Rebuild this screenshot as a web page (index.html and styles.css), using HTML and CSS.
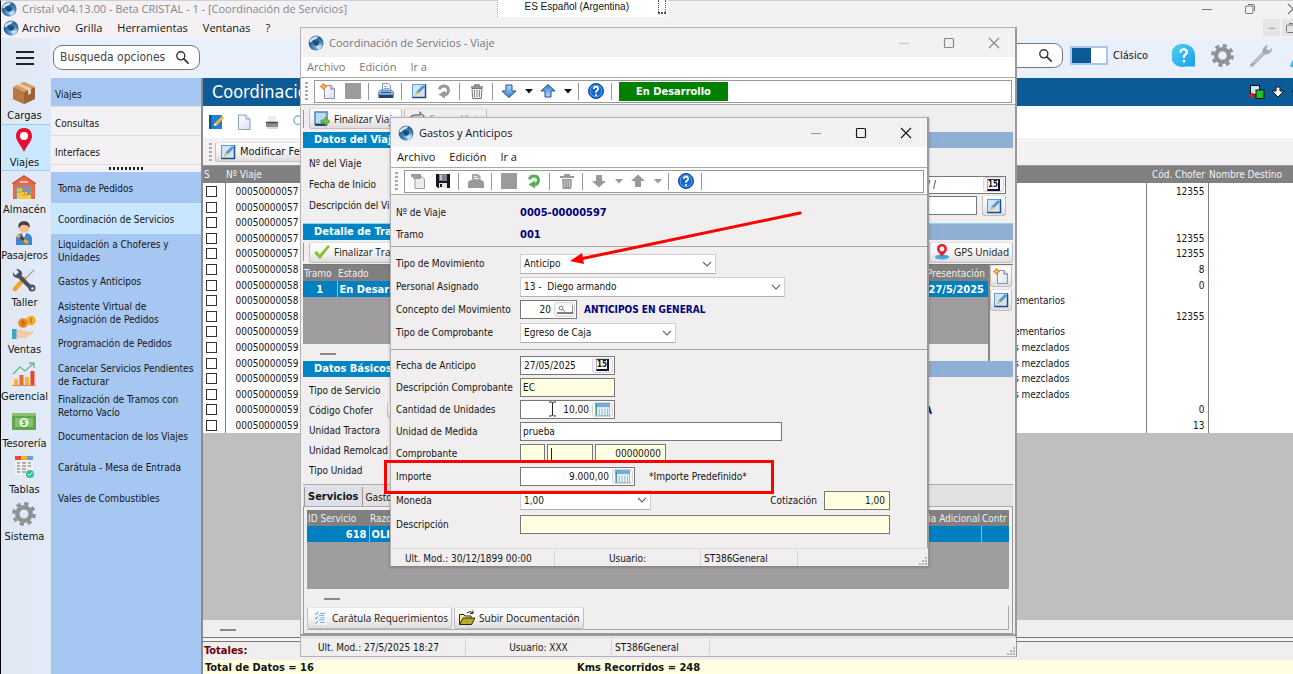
FILE: index.html
```html
<!DOCTYPE html>
<html lang="es">
<head>
<meta charset="utf-8">
<title>Cristal v04.13.00 - Coordinación de Servicios</title>
<link rel="stylesheet" href="styles.css">
</head>
<body>
<svg class="defs" aria-hidden="true">
  <defs>
    <radialGradient id="gGlobe" cx=".62" cy=".7" r=".75"><stop offset="0" stop-color="#d3ecf8"/><stop offset=".35" stop-color="#4e96c8"/><stop offset=".75" stop-color="#2a5f93"/><stop offset="1" stop-color="#7fa3c4"/></radialGradient>
    <linearGradient id="gBlue" x1="0" y1="0" x2="0" y2="1"><stop offset="0" stop-color="#b7ddfa"/><stop offset="1" stop-color="#2f7fd0"/></linearGradient>
    <linearGradient id="gPage" x1="0" y1="0" x2="1" y2="1"><stop offset="0" stop-color="#fff"/><stop offset="1" stop-color="#d8e0f2"/></linearGradient>
    <linearGradient id="gChat" x1="0" y1="0" x2="1" y2="1"><stop offset="0" stop-color="#55d0ee"/><stop offset="1" stop-color="#149ff0"/></linearGradient>
    <symbol id="globe" viewBox="0 0 16 16"><circle cx="8" cy="8" r="7.500" fill="url(#gGlobe)"/><path d="M2 5Q5 1 10 1.500Q9 4 5 5Q4 7 1.500 7.500Z" fill="#dbe9f4"/><path d="M4.500 6.500Q8 4 11 6.500Q12 10 8 11Q5 10 4.500 6.500Z" fill="#1d4d84"/><path d="M9 12Q12 12 14 9Q14 13 10 15Z" fill="#c5e6f5"/></symbol>
    <symbol id="search" viewBox="0 0 16 16"><circle cx="6.200" cy="6.200" r="4.300" fill="none" stroke="currentColor" stroke-width="1.500"/><path d="M9.500 9.500L14 14" stroke="currentColor" stroke-width="1.800" stroke-linecap="round"/></symbol>
    <symbol id="box" viewBox="0 0 24 24"><path d="M1 6L12 1L23 6V18L12 23L1 18Z" fill="#c98a54"/><path d="M1 6L12 11V23L1 18Z" fill="#b87843"/><path d="M12 11L23 6V18L12 23Z" fill="#9b6233"/><path d="M1 6L12 1L23 6L12 11Z" fill="#d99e68"/><path d="M5 4L16 9V14L19 12.500V7.500L8 2.700Z" fill="#ead0ae"/></symbol>
    <symbol id="pin" viewBox="0 0 24 24"><path d="M12 0C6 0 4 4.500 4 8C4 13 10 19 12 24C14 19 20 13 20 8C20 4.500 18 0 12 0Z" fill="#e5102f"/><circle cx="12" cy="8" r="4" fill="#fff"/></symbol>
    <symbol id="warehouse" viewBox="0 0 24 24"><path d="M1 8L12 1L23 8V24H1Z" fill="#e8694a"/><path d="M0 9L12 1L24 9" fill="none" stroke="#c9533c" stroke-width="1.500"/><rect x="4" y="11" width="16" height="13" fill="#8d8f9b"/><path d="M5 24V13H10V17H15V20H19V24Z" fill="#f6c945"/><path d="M5 17H10M10 20H15M7.500 13V15M12.500 17V19" stroke="#c9902a"/><rect x="8" y="6" width="8" height="2" fill="#f8c0a8"/></symbol>
    <symbol id="person" viewBox="0 0 24 24"><circle cx="12" cy="7" r="5" fill="#f3bd96"/><path d="M6.500 7Q5 1 12 0Q19 1 17.500 7Q15 3 10 4Z" fill="#4d3a3a"/><path d="M4 24V17Q5 12 12 12Q19 12 20 17V24Z" fill="#3b86d6"/><path d="M10 12L12 17L14 12Z" fill="#fff"/><path d="M5 14L16 22" stroke="#f3ad36" stroke-width="3"/><path d="M8 16L12 19" stroke="#444" stroke-width="3"/></symbol>
    <symbol id="tools" viewBox="0 0 24 24"><path d="M22 2L12 12" stroke="#a3a8ad" stroke-width="1.500"/><path d="M12 11L3 21" stroke="#f5a42a" stroke-width="4.500" stroke-linecap="round"/><path d="M5 6L19 20" stroke="#465260" stroke-width="4"/><path d="M1 4Q0 9 5 10Q10 10 10 5Q9 1 4 1L7 4L6 7L3 7Z" fill="#465260"/><circle cx="20" cy="20" r="3.500" fill="#465260"/><circle cx="20.500" cy="20.500" r="1.300" fill="#dde6f3"/></symbol>
    <symbol id="hand" viewBox="0 0 24 24"><circle cx="19" cy="5.500" r="4.800" fill="#f2ad2e"/><circle cx="11" cy="8" r="4.800" fill="#e88b1c"/><path d="M11 5.500V10.500M9.500 7Q13 6 12 9M19 3V8" stroke="#b4570b" fill="none"/><path d="M4 15Q9 13 12 16H17Q15 19 11 18.500L21 16Q23 16 21 18L14 23H4Z" fill="#f8c9a8"/><rect x="0" y="14" width="4.500" height="10" fill="#3aa7c9"/></symbol>
    <symbol id="chart" viewBox="0 0 24 24"><rect x="2" y="17" width="4" height="6" fill="#f9b233"/><rect x="7.500" y="13" width="4" height="10" fill="#f0662c"/><rect x="13" y="15" width="4" height="8" fill="#f9b233"/><rect x="18.500" y="9" width="4" height="14" fill="#e8452b"/><path d="M1 12L8 5L13 9L22 1M17 1H22V6" fill="none" stroke="#60b88e" stroke-width="1.300"/><path d="M0 23.500H24" stroke="#e9864a"/></symbol>
    <symbol id="cash" viewBox="0 0 24 24"><rect x="0" y="4" width="24" height="17" rx="1" fill="#5fa64e"/><rect x="0" y="4" width="24" height="3" fill="#86c46c"/><rect x="3" y="9" width="18" height="9" fill="#86c46c"/><circle cx="12" cy="13.500" r="4.500" fill="#e4f3da"/><path d="M13.500 11.500H11V13.500H13V15.500H10.500" fill="none" stroke="#4a9140"/></symbol>
    <symbol id="sheet" viewBox="0 0 24 24"><rect x="3" y="2" width="18" height="18" fill="#eef0ee"/><rect x="3" y="1" width="6" height="4" fill="#e9473f"/><rect x="9" y="1" width="6" height="4" fill="#f7b32b"/><rect x="15" y="1" width="6" height="4" fill="#58a6e8"/><path d="M5 8H8M5 11H8M5 14H8M5 17H8M10 8H14M10 11H14M10 14H14M10 17H14M16 8H19M16 11H19" stroke="#9a9c9c" stroke-width="1.500"/><circle cx="18" cy="19" r="4" fill="#2fc29b"/><path d="M16 19L17.500 20.500L20 17.500" stroke="#fff" fill="none"/></symbol>
    <symbol id="gear" viewBox="0 0 24 24"><circle cx="12" cy="12" r="6.700" fill="none" stroke="#8f9295" stroke-width="4.500"/><circle cx="12" cy="12" r="10.200" fill="none" stroke="#8f9295" stroke-width="3.400" stroke-dasharray="4.200 3.810"/></symbol>
    <symbol id="wrench" viewBox="0 0 24 24"><path d="M2 22L15 9" stroke="#a7aaaf" stroke-width="3.500" stroke-linecap="round"/><path d="M13 8Q13 2 19 1L17 5L20 7L23 4Q24 10 16 11Z" fill="#a7aaaf"/><path d="M4 20L14 10" stroke="#e6e7ea"/></symbol>
    <symbol id="chat" viewBox="0 0 24 24"><path d="M12 0A12 12 0 1 0 14 23.500H24V12A12 12 0 0 0 12 0Z" fill="url(#gChat)"/><path d="M8.500 9Q9 5.500 12.500 5.500Q16 6 15.500 9.500Q14 11 12.500 12.500V14.500" fill="none" stroke="#fff" stroke-width="2.200"/><circle cx="12.500" cy="18" r="1.500" fill="#fff"/></symbol>
    <symbol id="user" viewBox="0 0 24 24"><path d="M1 24Q2 15 12 14Q22 15 23 24Z" fill="#2fc4ea"/><circle cx="12" cy="7" r="6" fill="#f4dff0"/></symbol>
    <symbol id="new" viewBox="0 0 16 16"><path d="M4.500 2.500H11L14.500 6V15.500H4.500Z" fill="url(#gPage)" stroke="#8a8fb5"/><path d="M11 2.500V6H14.500" fill="#dfe4f4" stroke="#6d74a3"/><path d="M3.500 0L4.700 2.300L7 3.500L4.700 4.700L3.500 7L2.300 4.700L0 3.500L2.300 2.300Z" fill="#f58a1f" stroke="#f58a1f" stroke-width=".8"/><circle cx="3.500" cy="3.500" r="1" fill="#ffe3b0"/></symbol>
    <symbol id="newOff" viewBox="0 0 16 16"><path d="M5 3H11L14.500 6V15.500H5Z" fill="#ececec" stroke="#9c9c9c"/><path d="M1 1H11V6H3V4H1Z" fill="#9c9c9c"/></symbol>
    <symbol id="page" viewBox="0 0 16 16"><path d="M2.500 1H10L14 5V15.500H2.500Z" fill="url(#gPage)" stroke="#8ba0b5"/><path d="M10 1V5H14" fill="#eef" stroke="#8ba0b5"/></symbol>
    <symbol id="save" viewBox="0 0 16 16"><path d="M1 1H15V15H3L1 13Z" fill="#15171f"/><rect x="4" y="1" width="8" height="7" fill="#7f8187"/><path d="M5 2H7V7H5Z" fill="#bfc1c6"/><rect x="4" y="10" width="8" height="5" fill="#e4e5e8"/><rect x="5" y="11" width="2" height="3" fill="#15171f"/></symbol>
    <symbol id="print" viewBox="0 0 16 16"><path d="M4.500 .5H10L12.500 3V8H4.500Z" fill="#f6f9fd" stroke="#8796ad"/><path d="M6 3.500H9M6 5.500H11" stroke="#8fa5c0"/><path d="M.5 9L3 7H13L15.500 9V12H.5Z" fill="#88bce4" stroke="#4a78a8" stroke-width=".8"/><path d="M.5 12H15.500V15H.5Z" fill="#23466c"/><path d="M3 9.500H13" stroke="#355e89" stroke-width="1.200"/></symbol>
    <symbol id="printOff" viewBox="0 0 16 16"><path d="M4 1H10L12.500 3V8H4Z" fill="#aaa"/><path d="M6 3.500H9M6 5.500H11" stroke="#f4f4f4"/><path d="M0 9L2.500 7H13.500L16 9V15H0Z" fill="#9a9a9a"/></symbol>
    <symbol id="printGray" viewBox="0 0 16 16"><path d="M4 2H12V8H4Z" fill="#ececee"/><path d="M2 8H14V13H2Z" fill="#8d8d90"/><path d="M2 8.500H14" stroke="#444" stroke-width="1.500"/><path d="M3 13H14V15H3Z" fill="#d9d9db"/></symbol>
    <symbol id="edit" viewBox="0 0 16 16"><rect x="1.500" y="1.500" width="13" height="13" fill="#cfe6fa" stroke="#5f9bd0"/><path d="M1.500 14.500H14.500V1.500" fill="none" stroke="#214a80" stroke-width="1.500"/><path d="M4 12.500L6 8L12 2L14 4L8 10Z" fill="#5595cf"/><path d="M4 12.500L6 9L10 10Z" fill="#f3c94d"/></symbol>
    <symbol id="note" viewBox="0 0 16 16"><rect x="1" y="1" width="13" height="14" fill="#2380cc"/><path d="M1 1H3.500V15H1Z" fill="#0f538f"/><path d="M6 12L7 9L14 2L16 4L9 11Z" fill="#f6b53a"/><path d="M6 12L7 9L9 11Z" fill="#fff"/></symbol>
    <symbol id="undo" viewBox="0 0 16 16"><path d="M3.500 6.500Q4 3 8 3Q12.500 3.500 12.500 7.500Q12 11.500 8 12" fill="none" stroke="currentColor" stroke-width="3"/><path d="M2.500 11.500L9 7.500V15.500Z" fill="currentColor"/></symbol>
    <symbol id="trash" viewBox="0 0 16 16"><path d="M2 4H14M6 4V2H10V4" fill="none" stroke="#777" stroke-width="1.500"/><path d="M3 5.500H13L12.300 15.500H3.700Z" fill="#f0f0f0" stroke="#777"/><path d="M5.500 7V14M8 7V14M10.500 7V14" stroke="#888"/></symbol>
    <symbol id="trashOff" viewBox="0 0 16 16"><path d="M1 3H15V5H1ZM5 1H11V3H5ZM3 6H13L12.300 16H3.700Z" fill="#999"/><path d="M5.500 7V14M8 7V14M10.500 7V14" stroke="#c7c7c7"/></symbol>
    <symbol id="down" viewBox="0 0 16 16"><path d="M5 2H11V8H15L8 14.500L1 8H5Z" fill="url(#gBlue)" stroke="#1c4f94"/></symbol>
    <symbol id="downOff" viewBox="0 0 16 16"><path d="M5 2H11V8H15L8 14.500L1 8H5Z" fill="#999"/></symbol>
    <symbol id="downWhite" viewBox="0 0 14 12"><path d="M5 1H9V5H13L7 11L1 5H5Z" fill="#fff" stroke="#111"/></symbol>
    <symbol id="caret" viewBox="0 0 8 8"><path d="M0 2H8L4 6.500Z" fill="currentColor"/></symbol>
    <symbol id="help" viewBox="0 0 16 16"><circle cx="8" cy="8" r="7.500" fill="#1467d2" stroke="#0b459b"/><circle cx="8" cy="8" r="5.800" fill="none" stroke="#62a5f2"/><path d="M5.700 6Q6 3.700 8 3.700Q10.500 4 10.200 6.200Q9.500 7.500 8 8.500V9.800" fill="none" stroke="#fff" stroke-width="1.700"/><circle cx="8" cy="12" r="1.100" fill="#fff"/></symbol>
    <symbol id="finish" viewBox="0 0 16 16"><rect x="1" y="1" width="12" height="12" fill="#b9dbf5" stroke="#4a82b5" stroke-width="1.500"/><path d="M1 14H13" stroke="#234a77" stroke-width="2"/><path d="M7 9H11V6L16 10.500L11 15V12H7Z" fill="#7ac142" stroke="#438a1f" stroke-width=".7"/></symbol>
    <symbol id="loop" viewBox="0 0 16 16"><path d="M1 8Q2 4 7 4H11V1.500L15 5.500L11 9V6.500H5M15 9Q14 13 9 13H4" fill="none" stroke="#777" stroke-width="1.300"/></symbol>
    <symbol id="check" viewBox="0 0 16 16"><path d="M0 9L3 7L5.500 10.500L14 1L16 2.500L6 15Z" fill="#85c22b"/></symbol>
    <symbol id="gps" viewBox="0 0 16 16"><ellipse cx="8" cy="13" rx="7" ry="2.500" fill="#3aa9e0"/><path d="M8 0C4.500 0 3 2.500 3 5C3 8 7 10.500 8 13C9 10.500 13 8 13 5C13 2.500 11.500 0 8 0Z" fill="#e42330"/><circle cx="8" cy="5" r="2.400" fill="#fff"/></symbol>
    <symbol id="list" viewBox="0 0 16 16"><path d="M3 1H14V15H3Z" fill="#eef5fc"/><path d="M3 3.500L4 4.500L6 2M3 8L4 9L6 6.500M3 12.500L4 13.500L6 11" fill="none" stroke="#4f97d8"/><path d="M8 3.500H13M8 8H13M8 12.500H13M7 5.500H12M7 10H12" stroke="#8db0d0"/></symbol>
    <symbol id="folder" viewBox="0 0 16 16"><path d="M.5 14.500V4.500H5L6 6H12V8" fill="#f6ef9c" stroke="#2b2b12"/><path d="M.5 14.500L4 8H16L12.500 14.500Z" fill="#b4ac2c" stroke="#2b2b12"/><path d="M8 3Q11 0 14 3M14 .5V3.500H11" fill="none" stroke="#2b2b12"/></symbol>
    <symbol id="calc" viewBox="0 0 16 14"><rect x=".5" y=".5" width="15" height="13" fill="#eef6fc" stroke="#9db8cf"/><path d="M0 0H16V4.500H0Z" fill="#74abd8"/><path d="M4.500 6V13M7.500 6V13M10.500 6V13M13.500 6V13" stroke="#8cacc5"/><path d="M1.500 1V13" stroke="#3c9c8b" stroke-width="1.200"/></symbol>
    <symbol id="lens" viewBox="0 0 16 9"><path d="M0 0H16V8H0Z" fill="#fff"/><path d="M0 8H16V0" fill="none" stroke="#555" stroke-width="1.300"/><circle cx="4" cy="3" r="1.900" fill="none" stroke="#777"/><path d="M5.500 4.500L8 6.500" stroke="#777"/></symbol>
    <symbol id="chev" viewBox="0 0 10 10"><path d="M1 3L5 7L9 3" fill="none" stroke="#666" stroke-width="1.100"/></symbol>
    <symbol id="min" viewBox="0 0 12 12"><path d="M1 6.500H11" stroke="currentColor"/></symbol>
    <symbol id="max" viewBox="0 0 12 12"><rect x="1.500" y="1.500" width="9" height="9" rx="1" fill="none" stroke="currentColor" stroke-width="1.200"/></symbol>
    <symbol id="restore" viewBox="0 0 12 12"><rect x="1.500" y="3" width="7.500" height="7.500" rx="1" fill="none" stroke="currentColor"/><path d="M4 1.500H9Q10.500 1.500 10.500 3V8" fill="none" stroke="currentColor"/></symbol>
    <symbol id="close" viewBox="0 0 12 12"><path d="M1 1L11 11M11 1L1 11" stroke="currentColor" stroke-width="1.200"/></symbol>
    <symbol id="grip" viewBox="0 0 9 9"><path d="M7 1h2v2h-2zM7 4h2v2h-2zM4 4h2v2h-2zM7 7h2v2h-2zM4 7h2v2h-2zM1 7h2v2h-2z" fill="#b5b3b5"/></symbol>
    <symbol id="windows" viewBox="0 0 16 16"><rect x="1.500" y="1.500" width="9" height="9" fill="#cfe6f5" stroke="#111"/><rect x="7" y="6" width="8" height="8.500" fill="#20c024" stroke="#111"/><path d="M0 11L4 9V14ZM3 11.500H6" fill="#e02020" stroke="#e02020"/></symbol>
  </defs>
</svg>

<div class="app">
  <header class="titlebar app-title">
    <svg class="i16"><use href="#globe"/></svg>
    <h1>Cristal v04.13.00 - Beta CRISTAL - 1 - [Coordinación de Servicios]</h1>
    <span class="ctl"><button aria-label="Minimizar"><svg class="i12"><use href="#min"/></svg></button><button aria-label="Restaurar"><svg class="i12"><use href="#restore"/></svg></button><button aria-label="Cerrar"><svg class="i12"><use href="#close"/></svg></button></span>
  </header>
  <nav class="menubar app-menu">
    <svg class="i16"><use href="#globe"/></svg>
    <a href="#">Archivo</a><a href="#">Grilla</a><a href="#">Herramientas</a><a href="#">Ventanas</a><a href="#">?</a>
    <span class="mdi"><button aria-label="Minimizar ventana"><svg class="i8"><use href="#min"/></svg></button><button aria-label="Restaurar ventana"><svg class="i12"><use href="#restore"/></svg></button></span>
  </nav>
  <div class="lang"><span>ES Español (Argentina)</span><i></i></div>

  <div class="shell">
    <nav class="rail">
      <button class="burger" aria-label="Menú"><i></i><i></i><i></i></button>
      <div class="rail-list">
        <a href="#"><svg class="i24"><use href="#box"/></svg>Cargas</a>
        <a href="#" class="on"><svg class="i24"><use href="#pin"/></svg>Viajes</a>
        <a href="#"><svg class="i24"><use href="#warehouse"/></svg>Almacén</a>
        <a href="#"><svg class="i24"><use href="#person"/></svg>Pasajeros</a>
        <a href="#"><svg class="i24"><use href="#tools"/></svg>Taller</a>
        <a href="#"><svg class="i24"><use href="#hand"/></svg>Ventas</a>
        <a href="#"><svg class="i24"><use href="#chart"/></svg>Gerencial</a>
        <a href="#"><svg class="i24"><use href="#cash"/></svg>Tesorería</a>
        <a href="#"><svg class="i24"><use href="#sheet"/></svg>Tablas</a>
        <a href="#"><svg class="i24"><use href="#gear"/></svg>Sistema</a>
      </div>
    </nav>

    <div class="work">
      <div class="topbar">
        <label class="search"><input type="text" placeholder="Busqueda opciones" aria-label="Busqueda opciones"><svg class="i16"><use href="#search"/></svg></label>
        <span class="top-right">
          <label class="search search-r"><input type="text" aria-label="Buscar"><svg class="i16"><use href="#search"/></svg></label>
          <label class="toggle"><input type="checkbox">Clásico</label>
          <span class="top-icons"><svg class="i24"><use href="#chat"/></svg><svg class="i24"><use href="#gear"/></svg><svg class="i24"><use href="#wrench"/></svg><svg class="i24"><use href="#user"/></svg></span>
        </span>
      </div>
      <div class="cols">
        <aside class="submenu">
          <div class="groups"><a href="#" class="on">Viajes</a><a href="#">Consultas</a><a href="#">Interfaces</a></div>
          <div class="splitter"><i></i></div>
          <div class="entries">
            <a href="#">Toma de Pedidos</a>
            <a href="#" class="on">Coordinación de Servicios</a>
            <a href="#">Liquidación a Choferes y<br>Unidades</a>
            <a href="#">Gastos y Anticipos</a>
            <a href="#">Asistente Virtual de<br>Asignación de Pedidos</a>
            <a href="#">Programación de Pedidos</a>
            <a href="#">Cancelar Servicios Pendientes<br>de Facturar</a>
            <a href="#">Finalización de Tramos con<br>Retorno Vacío</a>
            <a href="#">Documentacion de los Viajes</a>
            <a href="#">Carátula - Mesa de Entrada</a>
            <a href="#">Vales de Combustibles</a>
          </div>
        </aside>

        <main class="main">
          <div class="main-head"><h2>Coordinación</h2><span><svg class="i16"><use href="#windows"/></svg><svg class="i-arr"><use href="#downWhite"/></svg><svg class="i-arr"><use href="#downWhite"/></svg></span></div>
          <div class="main-tools"><button aria-label="Editar"><svg class="i16"><use href="#note"/></svg></button><button aria-label="Nuevo"><svg class="i16"><use href="#page"/></svg></button><button aria-label="Imprimir"><svg class="i16"><use href="#printGray"/></svg></button><button aria-label="Buscar" class="pale"><svg class="i16"><use href="#search"/></svg></button></div>
          <div class="main-actions"><i class="grab"></i><button class="btn"><svg class="i16"><use href="#edit"/></svg>Modificar Fecha</button></div>
          <div class="grid-area">
            <table class="trips">
              <colgroup><col class="c-s"><col class="c-n"><col><col class="c-c"><col class="c-d"></colgroup>
              <thead><tr><th>S</th><th>Nº Viaje</th><th></th><th class="r">Cód. Chofer</th><th>Nombre Destino</th></tr></thead>
              <tbody>
                <tr><td><input type="checkbox" aria-label="Viaje 1"></td><td>00050000057</td><td></td><td>12355</td><td></td></tr>
                <tr><td><input type="checkbox" aria-label="Viaje 2"></td><td>00050000057</td><td></td><td></td><td></td></tr>
                <tr><td><input type="checkbox" aria-label="Viaje 3"></td><td>00050000057</td><td></td><td></td><td></td></tr>
                <tr><td><input type="checkbox" aria-label="Viaje 4"></td><td>00050000057</td><td></td><td>12355</td><td></td></tr>
                <tr><td><input type="checkbox" aria-label="Viaje 5"></td><td>00050000057</td><td></td><td>12355</td><td></td></tr>
                <tr><td><input type="checkbox" aria-label="Viaje 6"></td><td>00050000058</td><td></td><td>8</td><td></td></tr>
                <tr><td><input type="checkbox" aria-label="Viaje 7"></td><td>00050000058</td><td></td><td>0</td><td></td></tr>
                <tr><td><input type="checkbox" aria-label="Viaje 8"></td><td>00050000058</td><td>ementarios</td><td></td><td></td></tr>
                <tr><td><input type="checkbox" aria-label="Viaje 9"></td><td>00050000058</td><td></td><td>12355</td><td></td></tr>
                <tr><td><input type="checkbox" aria-label="Viaje 10"></td><td>00050000059</td><td>ementarios</td><td></td><td></td></tr>
                <tr><td><input type="checkbox" aria-label="Viaje 11"></td><td>00050000059</td><td>s mezclados</td><td></td><td></td></tr>
                <tr><td><input type="checkbox" aria-label="Viaje 12"></td><td>00050000059</td><td>s mezclados</td><td></td><td></td></tr>
                <tr><td><input type="checkbox" aria-label="Viaje 13"></td><td>00050000059</td><td>s mezclados</td><td></td><td></td></tr>
                <tr><td><input type="checkbox" aria-label="Viaje 14"></td><td>00050000059</td><td>s mezclados</td><td></td><td></td></tr>
                <tr><td><input type="checkbox" aria-label="Viaje 15"></td><td>00050000059</td><td></td><td>0</td><td></td></tr>
                <tr><td><input type="checkbox" aria-label="Viaje 16"></td><td>00050000059</td><td></td><td>13</td><td></td></tr>
              </tbody>
            </table>
          </div>
          <div class="hscroll"><i></i></div>
          <div class="totals">Totales:</div>
          <div class="sums"><span>Total de Datos = 16</span><span>Kms Recorridos = 248</span></div>
        </main>
      </div>
    </div>
  </div>
</div>

<section class="win win-trip">
  <header class="titlebar">
    <svg class="i16"><use href="#globe"/></svg><h2>Coordinación de Servicios - Viaje</h2>
    <span class="ctl"><button aria-label="Minimizar" class="dim"><svg class="i12"><use href="#min"/></svg></button><button aria-label="Maximizar"><svg class="i12"><use href="#max"/></svg></button><button aria-label="Cerrar"><svg class="i12"><use href="#close"/></svg></button></span>
  </header>
  <nav class="menubar"><a href="#">Archivo</a><a href="#">Edición</a><a href="#">Ir a</a></nav>
  <div class="toolbar"><i class="grab"></i><div class="tools">
    <button aria-label="Nuevo"><svg class="i16"><use href="#new"/></svg></button><button aria-label="Detener"><i class="sq"></i></button><i class="sep"></i>
    <button aria-label="Imprimir"><svg class="i16"><use href="#print"/></svg></button><i class="sep"></i>
    <button aria-label="Editar"><svg class="i16"><use href="#edit"/></svg></button><button aria-label="Deshacer" class="gray"><svg class="i16"><use href="#undo"/></svg></button><i class="sep"></i>
    <button aria-label="Eliminar"><svg class="i16"><use href="#trash"/></svg></button><i class="sep"></i>
    <button aria-label="Siguiente" class="wide"><svg class="i16"><use href="#down"/></svg><svg class="i8"><use href="#caret"/></svg></button>
    <button aria-label="Anterior" class="wide"><svg class="i16 flip"><use href="#down"/></svg><svg class="i8"><use href="#caret"/></svg></button><i class="sep"></i>
    <button aria-label="Ayuda"><svg class="i16"><use href="#help"/></svg></button><i class="sep"></i>
    <span class="state">En Desarrollo</span>
  </div></div>
  <div class="win-body">
    <div class="actions"><i class="bar"></i><button class="btn"><svg class="i16"><use href="#finish"/></svg>Finalizar Viaje</button><button class="btn off"><svg class="i16"><use href="#loop"/></svg>Cerrar Viaje</button></div>
    <h3 class="sect">Datos del Viaj</h3>
    <div class="info info-trip">
      <div><span>Nº del Viaje</span></div>
      <div><label for="finicio">Fecha de Inicio</label><span class="field f-date"><input id="finicio" type="text" value="/ /"><button aria-label="Calendario"><b class="cal">15</b></button></span></div>
      <div><label for="dviaje">Descripción del Via</label><input id="dviaje" class="box f-desc" type="text"><button class="btn sq-btn" aria-label="Editar"><svg class="i16"><use href="#edit"/></svg></button></div>
    </div>
    <h3 class="sect line">Detalle de Tra</h3>
    <div class="actions actions-leg"><i class="bar"></i><button class="btn"><svg class="i16"><use href="#check"/></svg>Finalizar Tra</button><button class="btn push"><svg class="i16"><use href="#gps"/></svg>GPS Unidad</button></div>
    <div class="legs">
      <div class="legs-grid">
        <table class="sub"><colgroup><col class="w34"><col><col class="w62"></colgroup><thead><tr><th>Tramo</th><th>Estado</th><th>Presentación</th></tr></thead><tbody><tr><td class="c">1</td><td>En Desarr</td><td>27/5/2025</td></tr></tbody></table>
        <div class="hscroll"><i></i></div>
      </div>
      <div class="legs-side"><button class="btn sq-btn" aria-label="Nuevo tramo"><svg class="i16"><use href="#new"/></svg></button><button class="btn sq-btn" aria-label="Editar tramo"><svg class="i16"><use href="#edit"/></svg></button></div>
    </div>
    <h3 class="sect">Datos Básicos</h3>
    <div class="info info-basic">
      <div>Tipo de Servicio</div>
      <div><span class="lab">Código Chofer</span><button class="btn mini" aria-label="Buscar chofer"></button><b class="navy tail">A</b></div>
      <div>Unidad Tractora</div><div>Unidad Remolcad</div><div>Tipo Unidad</div>
    </div>
    <div class="tabs"><button class="on">Servicios</button><button>Gastos</button></div>
    <div class="tab-page">
      <div class="svc-grid">
        <table class="sub"><colgroup><col class="w62"><col><col class="w84"><col class="w28"></colgroup><thead><tr><th>ID Servicio</th><th>Razo</th><th class="r">ia Adicional</th><th>Contr</th></tr></thead><tbody><tr><td class="r">618</td><td>OLI</td><td></td><td></td></tr></tbody></table>
        <div class="hscroll"><i></i></div>
      </div>
      <div class="svc-actions"><button class="btn"><svg class="i16"><use href="#list"/></svg>Carátula Requerimientos</button><button class="btn"><svg class="i16"><use href="#folder"/></svg>Subir Documentación</button></div>
    </div>
  </div>
  <footer class="status"><span class="s1">Ult. Mod.: 27/5/2025 18:27</span><span class="s2">Usuario: XXX</span><span class="s3">ST386General</span><svg class="grip"><use href="#grip"/></svg></footer>
</section>

<section class="win win-cost">
  <header class="titlebar">
    <svg class="i16"><use href="#globe"/></svg><h2>Gastos y Anticipos</h2>
    <span class="ctl"><button aria-label="Minimizar" class="dim"><svg class="i12"><use href="#min"/></svg></button><button aria-label="Maximizar"><svg class="i12"><use href="#max"/></svg></button><button aria-label="Cerrar"><svg class="i12"><use href="#close"/></svg></button></span>
  </header>
  <nav class="menubar"><a href="#">Archivo</a><a href="#">Edición</a><a href="#">Ir a</a></nav>
  <div class="toolbar"><i class="grab"></i><div class="tools">
    <button aria-label="Nuevo"><svg class="i16"><use href="#newOff"/></svg></button><button aria-label="Guardar"><svg class="i16"><use href="#save"/></svg></button><i class="sep"></i>
    <button aria-label="Imprimir"><svg class="i16"><use href="#printOff"/></svg></button><i class="sep"></i>
    <button aria-label="Detener"><i class="sq"></i></button><button aria-label="Deshacer" class="green"><svg class="i16"><use href="#undo"/></svg></button><i class="sep"></i>
    <button aria-label="Eliminar"><svg class="i16"><use href="#trashOff"/></svg></button><i class="sep"></i>
    <button aria-label="Siguiente" class="wide gray"><svg class="i16"><use href="#downOff"/></svg><svg class="i8"><use href="#caret"/></svg></button>
    <button aria-label="Anterior" class="wide gray"><svg class="i16 flip"><use href="#downOff"/></svg><svg class="i8"><use href="#caret"/></svg></button><i class="sep"></i>
    <button aria-label="Ayuda"><svg class="i16"><use href="#help"/></svg></button><i class="sep"></i>
  </div></div>
  <form class="form">
    <div class="part part-id">
      <div class="row"><span class="lbl">Nº de Viaje</span><b class="navy">0005-00000597</b></div>
      <div class="row"><span class="lbl">Tramo</span><b class="navy">001</b></div>
    </div>
    <div class="part part-type">
      <div class="row"><label class="lbl" for="tmov">Tipo de Movimiento</label><span class="sel w196"><select id="tmov"><option>Anticipo</option></select><svg><use href="#chev"/></svg></span></div>
      <div class="row"><label class="lbl" for="pers">Personal Asignado</label><span class="sel w265"><select id="pers"><option>13 - &nbsp;Diego armando</option></select><svg><use href="#chev"/></svg></span></div>
      <div class="row"><label class="lbl" for="conc">Concepto del Movimiento</label><span class="field w57"><input id="conc" class="r" type="text" value="20"><button type="button" aria-label="Buscar concepto"><svg class="lens"><use href="#lens"/></svg></button></span><b class="navy note">ANTICIPOS EN GENERAL</b></div>
      <div class="row"><label class="lbl" for="tcom">Tipo de Comprobante</label><span class="sel w156"><select id="tcom"><option>Egreso de Caja</option></select><svg><use href="#chev"/></svg></span></div>
    </div>
    <div class="part part-data">
      <div class="row"><label class="lbl" for="fant">Fecha de Anticipo</label><span class="field w95"><input id="fant" type="text" value="27/05/2025"><button type="button" aria-label="Calendario"><b class="cal">15</b></button></span></div>
      <div class="row"><label class="lbl" for="dcom">Descripción Comprobante</label><input id="dcom" class="box yel w95" type="text" value="EC"></div>
      <div class="row"><label class="lbl" for="cant">Cantidad de Unidades</label><span class="field w95"><input id="cant" class="r" type="text" value="10,00"><button type="button" aria-label="Calculadora"><svg class="calc"><use href="#calc"/></svg></button></span></div>
      <div class="row"><label class="lbl" for="umed">Unidad de Medida</label><input id="umed" class="box w262" type="text" value="prueba"></div>
      <div class="row"><label class="lbl" for="comp">Comprobante</label><span class="trio"><input id="comp" class="box yel w25" type="text"><input class="box yel w46 caret" type="text" aria-label="Punto de venta"><input class="box yel r w71" type="text" value="00000000" aria-label="Número"></span></div>
      <div class="row tall"><label class="lbl" for="imp">Importe</label><span class="field w115"><input id="imp" class="r" type="text" value="9.000,00"><button type="button" aria-label="Calculadora"><svg class="calc"><use href="#calc"/></svg></button></span><span class="note2">*Importe Predefinido*</span></div>
      <div class="row tall"><label class="lbl" for="mon">Moneda</label><span class="sel w131"><select id="mon"><option>1,00</option></select><svg><use href="#chev"/></svg></span><span class="quote"><label for="cot">Cotización</label><input id="cot" class="box yel r w66" type="text" value="1,00"></span></div>
      <div class="row tall"><label class="lbl" for="desc">Descripción</label><input id="desc" class="box yel w370" type="text"></div>
    </div>
  </form>
  <footer class="status"><span class="s1">Ult. Mod.: 30/12/1899 00:00</span><span class="s2">Usuario:</span><span class="s3">ST386General</span><svg class="grip"><use href="#grip"/></svg></footer>
  <div class="hilite"></div>
  <svg class="arrow" viewBox="0 0 236 56" aria-hidden="true"><path d="M232 3L12 49" stroke="#f00" stroke-width="3" stroke-linecap="round"/><path d="M2 51L14 43L16 54Z" fill="#f00"/></svg>
  <svg class="ibeam" viewBox="0 0 9 16" aria-hidden="true"><path d="M1 1H3.500L4.500 2L5.500 1H8M4.500 2V14M1 15H3.500L4.500 14L5.500 15H8" fill="none" stroke="#222"/></svg>
</section>
</body>
</html>
```
FILE: styles.css
```css
* { box-sizing: border-box; }
:root { --ui: "DejaVu Sans Condensed", "DejaVu Sans", sans-serif; --title: "Open Sans", "Noto Sans", sans-serif; --face: #f0eeef; --navy: #00007c; }
body { margin: 0; font: 10px/13px var(--ui); color: #151515; overflow: hidden; background: var(--face); }
h1, h2, h3 { margin: 0; font-weight: normal; }
a { color: inherit; text-decoration: none; }
button { font: inherit; color: inherit; background: none; border: 0; padding: 0; display: inline-flex; align-items: center; justify-content: center; }
input, select { font: inherit; color: inherit; margin: 0; border-radius: 0; }
i { display: block; flex: none; }
svg { display: block; flex: none; }
.defs { position: absolute; width: 0; height: 0; }
.i8 { width: 8px; height: 8px; }
.i12 { width: 12px; height: 12px; }
.i16 { width: 16px; height: 16px; }
.i24 { width: 24px; height: 24px; }
.i-arr { width: 14px; height: 12px; }
.flip { transform: rotate(180deg); }
.navy { color: var(--navy); }
.r { text-align: right; }

/* Application frame */
.app { height: 100vh; min-height: 560px; display: flex; flex-direction: column; border-left: 1px solid #000; border-top: 1px solid #d0ced0; }
.titlebar { display: flex; align-items: center; gap: 5px; font: 11px/14px var(--title); background: #f3f1f3; }
.titlebar h1, .titlebar h2 { font: inherit; white-space: nowrap; }
.ctl { margin-left: auto; display: flex; }
.app-title { height: 16px; padding-left: 0; color: #858585; overflow: hidden; }
.app-title .ctl { gap: 31px; margin-right: -6px; color: #777; }
.menubar { display: flex; align-items: center; gap: 15px; font: 11px/14px var(--title); }
.app-menu { height: 21px; padding-left: 2px; background: #f3f1f3; overflow: hidden; }
.app-menu .i16 { margin-right: -12px; }
.mdi { margin-left: auto; display: flex; gap: 2px; margin-right: -6px; color: #777; }
.mdi button { width: 17px; height: 17px; background: #e6e4e6; }
.lang { position: absolute; left: 497px; top: 0; width: 171px; height: 17px; background: #fff; border-left: 1px dotted #aaa; display: flex; justify-content: flex-end; gap: 29px; font: 10px/14px "Liberation Sans", sans-serif; white-space: nowrap; padding-right: 2px; }
.lang i { width: 8px; height: 14px; border: 2px solid #555; border-width: 0 1px 2px; border-style: dotted; }
.shell { flex: 1; display: flex; min-height: 0; }

.rail { width: 49px; flex: none; background: linear-gradient(90deg, #dfe7f3, #e3ebf8); }
.burger { display: flex; flex-direction: column; gap: 4px; height: 39px; width: 47px; }
.burger i { width: 18px; height: 2px; background: #222; }
.rail-list { display: grid; grid-template-rows: repeat(10, 1fr); height: 468px; }
.rail a { display: flex; flex-direction: column; align-items: center; gap: 4px; padding: 3px 2px 0 0; font-size: 11px; white-space: nowrap; border: 1px solid transparent; border-left: 0; }
.rail a.on { background: #cce8ff; border-color: #99d1f5; }

.work { flex: 1; min-width: 0; display: flex; flex-direction: column; }
.topbar { height: 40px; flex: none; display: flex; justify-content: space-between; background: #e9f0fc; padding: 7px 0 0 3px; }
.search { display: flex; align-items: center; width: 147px; height: 25px; background: #fff; border: 1px solid #777; border-radius: 9px; padding: 0 9px 0 6px; color: #333; }
.search input { flex: 1; min-width: 0; border: 0; outline: 0; padding: 0; background: none; font-size: 12px; }
.search input::placeholder { color: #444; opacity: 1; }
.search .i16 { width: 15px; height: 15px; }
.top-right { display: flex; gap: 7px; align-items: center; height: 25px; overflow: hidden; margin-top: -2px; width: 276px; flex: none; }
.search-r { width: 94px; margin-left: -48px; flex: none; }
.toggle { display: flex; align-items: center; gap: 5px; font-size: 11px; }
.toggle input { appearance: none; width: 38px; height: 19px; border: 2px solid #a6c7f0; background: linear-gradient(90deg, #0c5a96 19px, #fff 19px); }
.top-icons { display: flex; gap: 16px; margin-left: 17px; }
.top-icons svg { width: 23px; height: 23px; }

.cols { flex: 1; display: flex; min-height: 0; }
.submenu { width: 151px; flex: none; background: #a6c7f1; border-left: 1px solid #dfe9f8; }
.groups a { display: flex; align-items: center; height: 29px; padding: 4px 0 0 4px; background: #f3f1f3; border-bottom: 1px solid #dfdddf; }
.groups a.on { background: #a6c7f1; }
.splitter { height: 7px; background: #f3f1f3; padding: 2px 0 0 58px; }
.splitter i { width: 35px; height: 3px; background: repeating-linear-gradient(100deg, #222 0 2px, transparent 2px 4px); }
.entries a { display: flex; align-items: center; height: 31px; padding: 2px 0 0 7px; white-space: nowrap; }
.entries a.on { background: #c8e6ff; }

.main { flex: 1; min-width: 0; display: flex; flex-direction: column; border-left: 2px solid #8a8c90; background: var(--face); }
.main-head { height: 28px; flex: none; display: flex; align-items: center; justify-content: space-between; padding-left: 9px; background: #0c5a96; color: #fff; overflow: hidden; }
.main-head h2 { font-size: 18px; line-height: 20px; }
.main-head span { display: flex; align-items: center; gap: 6px; margin-right: -12px; }
.main-tools { height: 32px; flex: none; display: flex; gap: 12px; align-items: center; padding-left: 5px; background: #fff; }
.pale { color: #8fb3cf; }
.main-actions { height: 28px; flex: none; display: flex; align-items: center; gap: 3px; padding-left: 6px; background: #f3f1f3; border-bottom: 1px solid #999; }
.grab { width: 3px; height: 18px; background: repeating-linear-gradient(#aaa 0 2px, transparent 2px 4px); }
.btn { height: 20px; gap: 4px; padding: 0 3px 0 4px; white-space: nowrap; border: 1px solid #c0bebf; border-top-color: #e2e0e1; border-radius: 3px; background: linear-gradient(#fff, #f5f3f4 50%, #dedcdd); font: 10px/14px var(--title); }
.main-actions .btn { font: 11px/14px var(--ui); }
.grid-area { flex: 1; min-height: 0; background: #bfbfbf; overflow: hidden; }
.trips { width: 100%; border-collapse: collapse; table-layout: fixed; }
.c-s { width: 22px; } .c-n { width: 789px; } .c-c { width: 62px; } .c-d { width: 85px; }
.trips th { height: 17px; padding: 0 1px; background: #808080; color: #f4f4f4; font-weight: normal; text-align: left; white-space: nowrap; }
.trips th.r { text-align: right; padding-right: 3px; }
.trips td { height: 16px; padding: 0; background: #fff; white-space: nowrap; line-height: 13px; }
.trips tr:nth-child(5n) td, .trips tr:nth-child(5n+3) td { height: 15px; }
.trips td:nth-child(1) { border-right: 1px solid #808080; padding-left: 3px; }
.trips td:nth-child(2) { padding-left: 10px; }
.trips td:nth-child(4) { border: 1px solid #808080; border-width: 0 1px; text-align: right; padding-right: 3px; }
.trips input { appearance: none; display: block; width: 11px; height: 11px; border: 1px solid #333; background: #fff; }
.hscroll { height: 17px; flex: none; background: var(--face); padding: 9px 0 0 17px; }
.hscroll i { width: 16px; height: 2px; background: #8a8889; }
.totals { height: 23px; flex: none; border-top: 1px solid #777; padding: 6px 0 0 1px; font-weight: bold; color: #6e0000; background: var(--face); font-size: 11px; box-shadow: inset 0 3px #f4f4f4, inset 0 4px #777; }
.sums { height: 14px; flex: none; display: flex; background: #ffffe1; font-weight: bold; font-size: 11px; line-height: 15px; padding-left: 2px; }
.sums span:first-child { width: 372px; }

/* Floating windows */
.win { position: absolute; display: flex; flex-direction: column; background: var(--face); border: 1px solid #b4b2b4; border-right: 2px solid #999; }
.win .titlebar { height: 29px; padding-left: 7px; overflow: hidden; }
.win .ctl { gap: 33px; padding-right: 15px; }
.win .dim { opacity: .4; }
.win .menubar { height: 20px; padding-left: 6px; gap: 14px; background: #fff; font-size: 11px; }
.toolbar { height: 28px; display: flex; align-items: center; gap: 6px; padding: 0 3px 0 4px; border: 1px solid #aaa; border-width: 1px 0; background: #fafafa; }
.tools { flex: 1; height: 23px; min-width: 0; display: flex; align-items: center; border: 1px solid #999; background: #fff; padding-left: 0; }
.tools button { width: 25px; height: 20px; }
.tools .wide { width: 39px; gap: 8px; }
.tools .gray { color: #999; }
.tools .green { color: #58b052; }
.sq { width: 16px; height: 16px; background: #9b9b9b; }
.sep { width: 1px; height: 17px; background: #999; margin: 0 4px 0 3px; }
.state { background: #008000; color: #fff; font-weight: bold; font-size: 11px; line-height: 19px; padding: 0 17px; margin-left: 3px; }
.field { display: inline-flex; align-items: center; height: 19px; background: #fff; border: 1px solid #777; padding-right: 1px; }
.field input { flex: 1; min-width: 0; height: 100%; border: 0; background: none; outline: 0; padding: 0 3px; }
.field button { width: 21px; height: 15px; border: 1px solid #d6d4d5; border-radius: 3px; background: #f6f5f6; }
.box { height: 19px; border: 1px solid #777; background: #fff; outline: 0; padding: 0 2px; }
.box.r { padding-right: 4px; }
.yel { background: #ffffe1; }
.caret { background: linear-gradient(#222, #222) 3px 3px / 1px 12px no-repeat #ffffe1; }
.row .cal, .cal { font-size: 8px; line-height: 9px; height: 12px; padding: 0; border: 1px solid #aaa; border-right: 2px solid #113; border-bottom: 2px solid #113; border-top-color: #333; background: #fff; }
.status { display: flex; align-items: center; flex: none; margin-right: -1px; background: var(--face); border-top: 1px solid #dcdadb; }
.status span { height: 16px; line-height: 17px; border-right: 1px solid #d5d3d4; white-space: nowrap; }
.grip { width: 9px; height: 9px; margin: 6px 1px 0 auto; }

.win-trip { left: 300px; right: 276px; top: 27px; }
.win-trip .titlebar, .win-trip .menubar { color: #777; }
.win-trip .ctl { color: #888; }
.win-body { padding: 0 2px; border-bottom: 2px solid #999; }
.actions { height: 27px; display: flex; align-items: center; gap: 5px; padding-left: 0; }
.actions .bar { width: 1px; height: 18px; background: #999; }
.actions .btn { height: 21px; }
.actions .off { color: #999; margin-left: -3px; background: none; }
.actions-leg { height: 24px; }
.push { margin-left: auto; }
.sect { height: 16px; padding-left: 11px; background: linear-gradient(90deg, #0085c4 0, #0085c4 20%, #8fafd4 90%); color: #fff; font: bold 11px/16px var(--ui); white-space: nowrap; }
.sect.line { height: 17px; border-top: 1px solid #8fd4ee; }
.info > div { display: flex; align-items: center; padding: 0 7px 0 6px; white-space: nowrap; }
.info-trip { height: 75px; padding-top: 5px; }
.info-trip > div { height: 21px; }
.f-date { width: 108px; margin-left: auto; height: 18px; }
.f-date input { padding-left: 28px; }
.f-desc { width: 100px; margin: 0 5px 0 auto; }
.sq-btn { width: 24px; height: 21px; padding: 0; }
.info-basic { height: 107px; padding-top: 3px; }
.info-basic > div { height: 20px; }
.info-basic .lab { width: 78px; }
.mini { width: 20px; height: 16px; }
.tail { margin: 0 74px 0 auto; }
.legs { height: 97px; display: flex; border-top: 1px solid #777; }
.legs-grid { flex: 1; min-width: 0; display: flex; flex-direction: column; justify-content: space-between; background: #9f9da0; border-right: 2px solid #888; }
.legs-side { width: 23px; display: flex; flex-direction: column; gap: 2px; }
.legs-side .sq-btn { width: 22px; height: 22px; }
.sub { width: 100%; border-collapse: collapse; table-layout: fixed; }
.sub th { height: 16px; padding: 0 1px; text-align: left; font-weight: normal; background: #808080; color: #eee; white-space: nowrap; overflow: hidden; }
.sub td { height: 16px; padding: 0 2px; background: #0080c0; color: #fff; font-weight: bold; font-size: 11px; border-right: 1px solid #7cc0e4; white-space: nowrap; overflow: hidden; }
.sub td:last-child { border-right: 0; }
.sub td.c { text-align: center; }
.sub .r { text-align: right; }
.w34 { width: 34px; } .w62 { width: 62px; } .w84 { width: 84px; } .w28 { width: 28px; }
.tabs { height: 22px; display: flex; align-items: flex-end; border-top: 1px solid #aaa; background: #e3e1e2; padding-left: 1px; }
.tabs button { height: 18px; padding: 0 3px; border: 1px solid #999; border-width: 0 1px 0 0; }
.tabs .on { font-weight: bold; font-size: 11px; height: 19px; background: #dce0ea; border-left-width: 1px; }
.tab-page { border: 1px solid #999; border-top-color: #aaa; padding: 3px; display: flex; flex-direction: column; height: 128px; }
.svc-grid { flex: 1; display: flex; flex-direction: column; justify-content: space-between; background: #9f9da0; }
.svc-actions { height: 24px; display: flex; gap: 2px; align-items: center; border-right: 1px solid #aaa; border-bottom: 1px solid #aaa; }
.svc-actions .btn { height: 22px; }
.win-trip .status { height: 19px; margin-top: 1px; }
.win-trip .s1 { width: 165px; padding-left: 17px; }
.win-trip .s2 { width: 146px; text-align: center; }
.win-trip .s3 { width: 98px; padding-left: 3px; }

.win-cost { left: 390px; width: 539px; top: 117px; border-bottom: 0; box-shadow: 0 1px 3px rgba(0, 0, 0, .25); }
.part { padding-left: 5px; }
.part-id { padding-top: 6px; padding-bottom: 1px; border-bottom: 1px solid #a8a6a7; }
.part-type { padding-top: 5px; padding-bottom: 5px; border-bottom: 1px solid #a8a6a7; }
.part-data { padding-top: 4px; padding-bottom: 12px; }
.row { display: flex; align-items: center; height: 22px; white-space: nowrap; }
.part-type .row { height: 23px; }
.row.tall { height: 24px; }
.row b { font-size: 11px; }
.lbl { width: 124px; flex: none; }
.sel { display: grid; align-items: center; }
.sel select, .sel svg { grid-area: 1 / 1; }
.sel select { appearance: none; width: 100%; height: 20px; border: 1px solid #d0ced0; border-bottom-color: #b0aeb0; background: #fff; padding: 0 3px; }
.sel svg { width: 10px; height: 10px; justify-self: end; margin-right: 4px; pointer-events: none; }
.w25 { width: 25px; } .w46 { width: 46px; } .w57 { width: 57px; } .w66 { width: 66px; } .w71 { width: 71px; } .w95 { width: 95px; } .w115 { width: 115px; } .w131 { width: 131px; } .w156 { width: 156px; } .w196 { width: 196px; } .w262 { width: 262px; } .w265 { width: 265px; } .w370 { width: 370px; }
.trio { display: flex; gap: 2px; }
.row .note { margin-left: 7px; font-size: 10px; }
.note2 { margin-left: 14px; }
.quote { margin-left: auto; margin-right: 37px; display: flex; align-items: center; gap: 7px; }
.lens { width: 16px; height: 9px; }
.calc { width: 15px; height: 13px; }
.win-cost .status { height: 18px; }
.win-cost .s1 { width: 164px; padding-left: 14px; }
.win-cost .s2 { width: 146px; text-align: center; }
.win-cost .s3 { width: 97px; padding-left: 3px; }
.hilite { position: absolute; left: -7px; top: 342px; width: 390px; height: 34px; border: 3px solid #f00; }
.arrow { position: absolute; left: 177px; top: 92px; width: 236px; height: 56px; }
.ibeam { position: absolute; left: 157px; top: 283px; width: 9px; height: 16px; }
```
